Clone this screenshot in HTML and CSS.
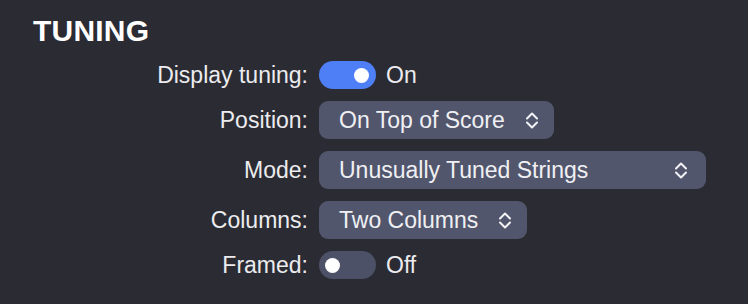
FILE: index.html
```html
<!DOCTYPE html>
<html>
<head>
<meta charset="utf-8">
<link rel="stylesheet" href="styles.css">
</head>
<body>
<div class="panel">
  <h1 class="title">TUNING</h1>
  <div class="form">
    <div class="label">Display tuning:</div>
    <div class="control">
      <span class="toggle on"><span class="knob"></span></span>
      <span class="state">On</span>
    </div>

    <div class="label">Position:</div>
    <div class="control">
      <span class="select">
        <span class="value">On Top of Score</span>
        <svg class="chev" width="12" height="19" viewBox="0 0 12 19"><path d="M1 7.5 L6 2.5 L11 7.5 M1 11.5 L6 16.5 L11 11.5" fill="none" stroke="#f2f2f5" stroke-width="2" stroke-linecap="round" stroke-linejoin="round"/></svg>
      </span>
    </div>

    <div class="label">Mode:</div>
    <div class="control">
      <span class="select wide">
        <span class="value">Unusually Tuned Strings</span>
        <svg class="chev" width="12" height="19" viewBox="0 0 12 19"><path d="M1 7.5 L6 2.5 L11 7.5 M1 11.5 L6 16.5 L11 11.5" fill="none" stroke="#f2f2f5" stroke-width="2" stroke-linecap="round" stroke-linejoin="round"/></svg>
      </span>
    </div>

    <div class="label">Columns:</div>
    <div class="control">
      <span class="select">
        <span class="value">Two Columns</span>
        <svg class="chev" width="12" height="19" viewBox="0 0 12 19"><path d="M1 7.5 L6 2.5 L11 7.5 M1 11.5 L6 16.5 L11 11.5" fill="none" stroke="#f2f2f5" stroke-width="2" stroke-linecap="round" stroke-linejoin="round"/></svg>
      </span>
    </div>

    <div class="label">Framed:</div>
    <div class="control">
      <span class="toggle off"><span class="knob"></span></span>
      <span class="state">Off</span>
    </div>
  </div>
</div>
</body>
</html>
```

FILE: styles.css
```css
html, body {
  margin: 0;
  padding: 0;
  background: #2b2b33;
}
body {
  width: 748px;
  height: 304px;
  overflow: hidden;
  font-family: "Liberation Sans", Arial, sans-serif;
  color: #ececef;
}
.panel {
  padding: 16px 0 0 33px;
}
.title {
  margin: 0;
  font-size: 30px;
  line-height: 30px;
  font-weight: 700;
  color: #ffffff;
  letter-spacing: 0.2px;
}
.form {
  margin-top: 15px;
  display: grid;
  grid-template-columns: 275px auto;
  column-gap: 11px;
  row-gap: 12px;
  align-items: center;
  font-size: 23px;
}
.label {
  text-align: right;
  white-space: nowrap;
}
.control {
  display: flex;
  align-items: center;
  justify-content: flex-start;
}
.toggle {
  width: 57px;
  height: 28px;
  border-radius: 14px;
  display: flex;
  align-items: center;
  box-sizing: border-box;
  padding: 0 7px;
}
.toggle.on {
  background: #4f7ff6;
  justify-content: flex-end;
}
.toggle.off {
  background: #4d5167;
  justify-content: flex-start;
  padding-left: 6px;
}
.knob {
  width: 15px;
  height: 15px;
  border-radius: 50%;
  background: #ffffff;
}
.state {
  margin-left: 10px;
}
.select {
  height: 38px;
  border-radius: 9px;
  background: #51566d;
  display: flex;
  align-items: center;
  padding: 0 16px 0 20px;
  color: #f0f0f3;
}
.select.wide {
  width: 387px;
  box-sizing: border-box;
  justify-content: space-between;
  padding-right: 19px;
}
.select .value {
  white-space: nowrap;
}
.chev {
  margin-left: 21px;
  display: block;
}
```
